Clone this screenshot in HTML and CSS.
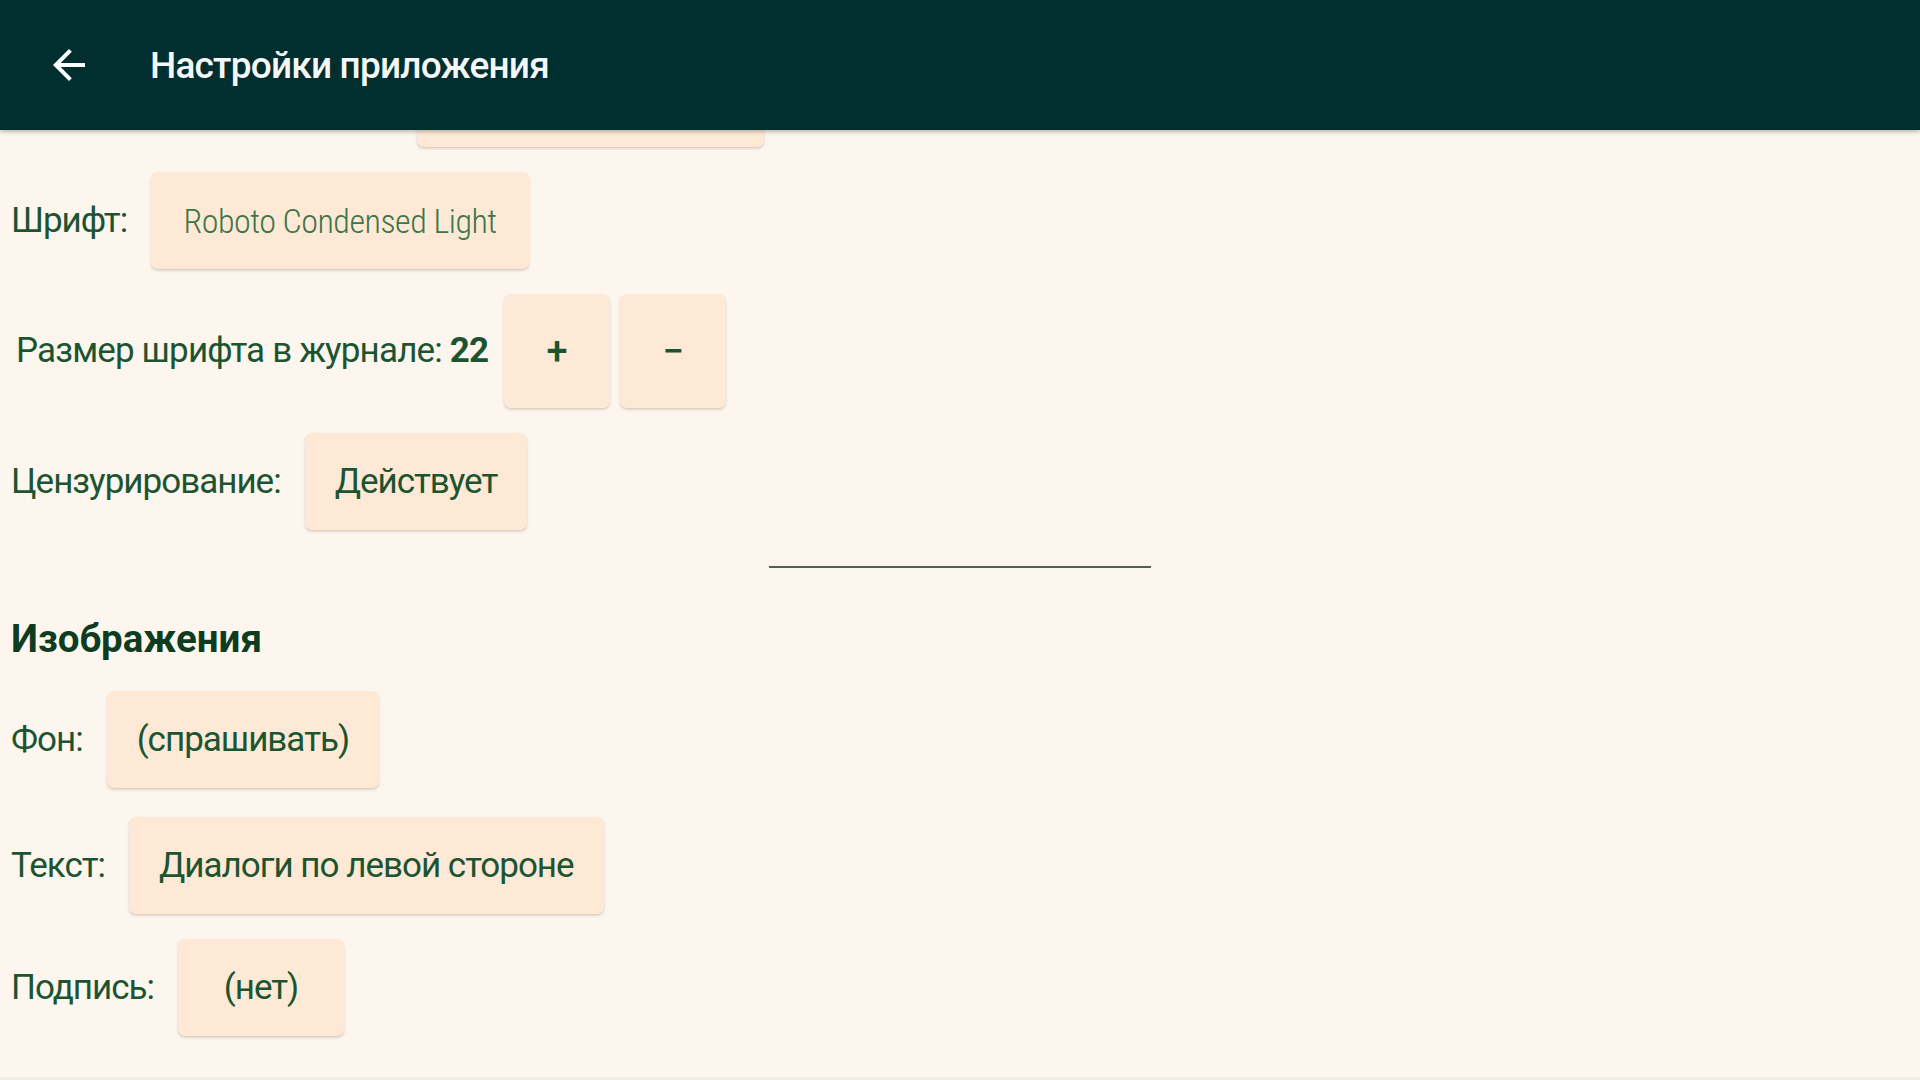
FILE: index.html
```html
<!DOCTYPE html>
<html lang="ru">
<head>
<meta charset="utf-8">
<title>Настройки приложения</title>
<link rel="stylesheet" href="styles.css">
</head>
<body>
<div class="page">
  <header class="appbar">
    <svg class="back" viewBox="0 0 24 24" width="48" height="48" aria-hidden="true">
      <path d="M20 11H7.83l5.59-5.59L12 4l-8 8 8 8 1.41-1.41L7.83 13H20v-2z" fill="#ffffff"/>
    </svg>
    <h1 class="title">Настройки приложения</h1>
  </header>
  <main class="content">
    <div class="row row-partial">
      <span class="spacer"></span>
      <div class="btn btn-wide"></div>
    </div>
    <div class="row">
      <span class="label">Шрифт:</span>
      <div class="btn btn-font">Roboto Condensed Light</div>
    </div>
    <div class="row row-size">
      <span class="label label-size">Размер шрифта в журнале: <b>22</b></span>
      <div class="btn btn-sq">+</div>
      <div class="btn btn-sq">−</div>
    </div>
    <div class="row">
      <span class="label">Цензурирование:</span>
      <div class="btn">Действует</div>
    </div>
    <div class="divider"></div>
    <h2 class="heading">Изображения</h2>
    <div class="row row-after-heading">
      <span class="label">Фон:</span>
      <div class="btn">(спрашивать)</div>
    </div>
    <div class="row row-text">
      <span class="label">Текст:</span>
      <div class="btn">Диалоги по левой стороне</div>
    </div>
    <div class="row">
      <span class="label">Подпись:</span>
      <div class="btn">(нет)</div>
    </div>
  </main>
  <div class="bottom-edge"></div>
</div>
</body>
</html>
```

FILE: styles.css
```css
html, body {
  margin: 0;
  padding: 0;
  background: #fdf6ef;
}

.page {
  width: 1920px;
  height: 1080px;
  display: flex;
  flex-direction: column;
  overflow: hidden;
  font-family: Roboto, "Noto Sans", "Liberation Sans", sans-serif;
  color: #1c5431;
}

.appbar {
  height: 130px;
  flex: 0 0 130px;
  background: #012e2f;
  display: flex;
  align-items: center;
  padding-left: 45px;
  box-sizing: border-box;
  box-shadow: 0 2px 4px rgba(0, 0, 0, 0.25);
  position: relative;
  z-index: 2;
}

.back {
  display: block;
  flex: 0 0 48px;
}

.title {
  margin: 0 0 0 57px;
  font-size: 37px;
  letter-spacing: -0.8px;
  font-weight: 500;
  color: #f4f7f5;
  line-height: 1;
}

.content {
  flex: 1 1 auto;
  overflow: hidden;
  display: flex;
  flex-direction: column;
  gap: 25px;
  padding-left: 11px;
}

.row {
  display: flex;
  align-items: center;
  gap: 24px;
}

.row-partial {
  margin-top: -80px;
}

.spacer {
  width: 382px;
  height: 10px;
}

.label {
  font-size: 35px;
  letter-spacing: -1px;
  line-height: 42px;
  white-space: nowrap;
}

.label b {
  font-weight: 700;
}

.label-size {
  padding-left: 5px;
  letter-spacing: -0.85px;
}

.row-size {
  gap: 16px;
}

.row-size .btn-sq + .btn-sq {
  margin-left: -6px;
}

.btn {
  height: 97px;
  min-width: 166px;
  padding: 0 30px;
  box-sizing: border-box;
  background: #fde9d5;
  border-radius: 7px;
  box-shadow: 0 2px 3px rgba(90, 60, 30, 0.16), 0 1px 1px rgba(90, 60, 30, 0.08);
  display: flex;
  align-items: center;
  justify-content: center;
  font-size: 35px;
  letter-spacing: -1px;
  white-space: nowrap;
}

.btn-wide {
  width: 347px;
}

.btn-font {
  width: 378px;
  font-family: "Roboto Condensed", Roboto, sans-serif;
  font-size: 34px;
  letter-spacing: -0.5px;
  font-weight: 300;
  color: #3d7548;
}

.btn-sq {
  width: 106px;
  min-width: 0;
  height: 114px;
  padding: 0;
  font-size: 38px;
  letter-spacing: 0;
  font-weight: 500;
}

.divider {
  align-self: center;
  width: 382px;
  height: 2px;
  margin-left: -11px;
  margin-top: 11px;
  background: #5a5a55;
}

.heading {
  margin: 25px 0 0 0;
  font-size: 38.5px;
  font-weight: 700;
  line-height: 42px;
  color: #0e3c20;
}

.row-after-heading {
  margin-top: 6px;
}

.row-text {
  margin-top: 4px;
}

.bottom-edge {
  flex: 0 0 3px;
  background: #f0eee4;
}
```
